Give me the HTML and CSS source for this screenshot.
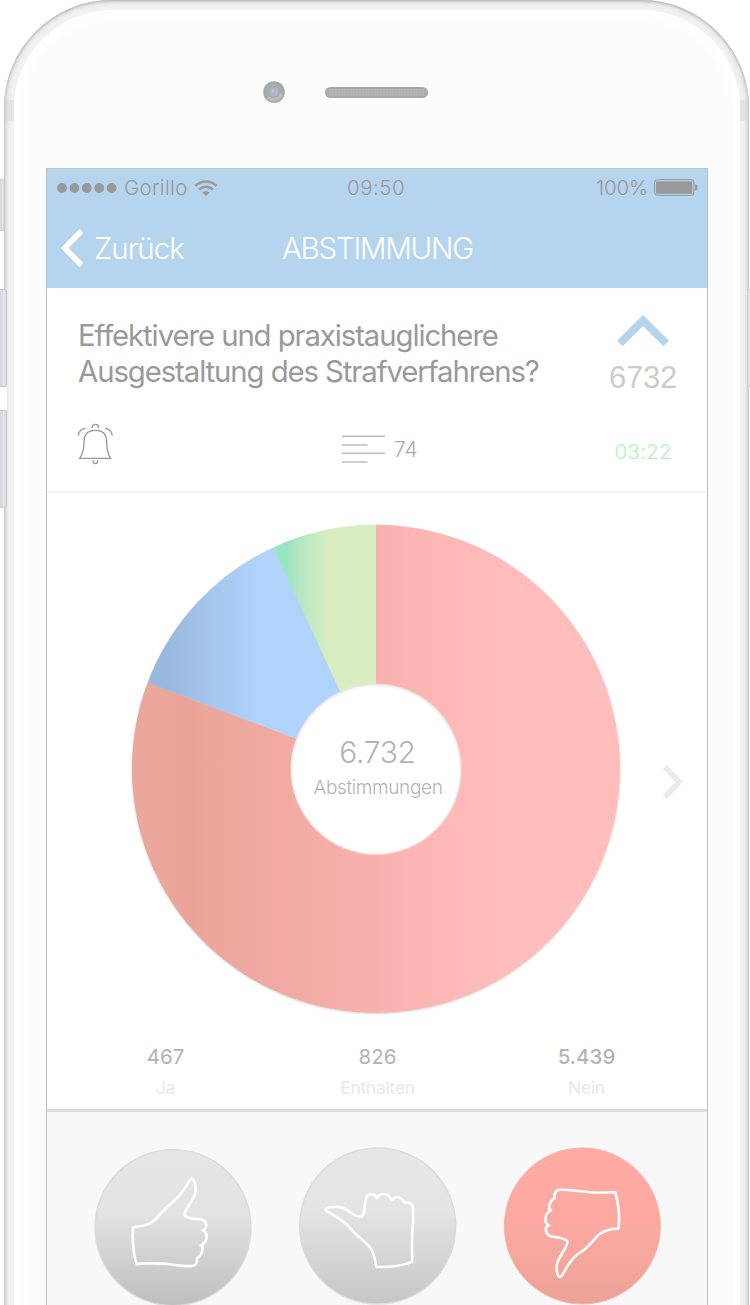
FILE: index.html
```html
<!DOCTYPE html>
<html lang="de">
<head>
<meta charset="utf-8">
<title>Abstimmung</title>
<link rel="stylesheet" href="styles.css">
</head>
<body>
<div class="stage">
  <div class="phone">
    <i class="antenna antenna-left"></i><i class="antenna antenna-right"></i>
    <div class="face">
      <div class="sensors">
        <svg class="camera" width="22" height="22" viewBox="0 0 22 22"><circle cx="11" cy="11" r="10.800" fill="#a6a6a6"/><circle cx="11" cy="11" r="8.600" fill="#acacac"/><path d="M3.500 17A10 10 0 0 0 20 14L15 11Z" fill="#bdbdbd"/><circle cx="11" cy="11" r="6.200" fill="#a9abb5"/><circle cx="11" cy="11" r="4.600" fill="#b0b5cb"/><circle cx="10" cy="10" r="1.500" fill="#bcc2d6"/><circle cx="13.500" cy="11.500" r="1" fill="#bcc2d6"/></svg>
        <div class="speaker"></div>
      </div>
      <main class="screen">
        <div class="status">
          <div class="carrier">
            <svg width="60" height="10" viewBox="0 0 60 10" fill="#999"><circle cx="5" cy="5" r="4.900"/><circle cx="17.400" cy="5" r="4.900"/><circle cx="29.800" cy="5" r="4.900"/><circle cx="42.200" cy="5" r="4.900"/><circle cx="54.600" cy="5" r="4.900"/></svg>
            <span class="carrier-name">Gorillo</span>
            <svg class="wifi" width="24" height="16" viewBox="0 0 24 16"><g fill="none" stroke="#999" stroke-width="2.500"><path d="M1.300 5.900Q6 1.500 12 1.500T22.700 5.900"/><path d="M5 9.700Q8.200 6.700 12 6.700T19 9.700"/></g><path d="M8.300 12.600Q12 9.400 15.700 12.600L12 15.900Z" fill="#999"/></svg>
          </div>
          <span class="clock">09:50</span>
          <div class="power">
            <span class="percent">100%</span>
            <svg width="44" height="17" viewBox="0 0 44 17"><rect x=".6" y=".6" width="39.300" height="15.800" rx="3" fill="none" stroke="#999" stroke-width="1"/><rect x="2" y="2.300" width="36.300" height="12.400" rx="1" fill="#999"/><path d="M41 5.500h1.200q1.300.5 1.300 3t-1.300 3H41z" fill="#999"/></svg>
          </div>
        </div>
        <header class="nav">
          <a class="back">
            <svg width="22" height="38" viewBox="0 0 22 38"><path d="M20.300 2L3.500 19 20.300 36" fill="none" stroke="#fff" stroke-width="5.500"/></svg>
            <span>Zurück</span>
          </a>
          <h1 class="nav-title">ABSTIMMUNG</h1>
        </header>
        <section class="question">
          <div class="question-top">
            <h2 class="question-text"><span class="line-one">Effektivere und praxistauglichere</span><br><span class="line-two">Ausgestaltung des Strafverfahrens?</span></h2>
            <div class="votes">
              <svg width="52" height="32" viewBox="0 0 52 32"><path d="M2.800 28.500L26 5.500 49.200 28.500" fill="none" stroke="#b5d4ed" stroke-width="8"/></svg>
              <span class="votes-count">6732</span>
            </div>
          </div>
          <div class="meta">
            <svg class="bell" width="42" height="45" viewBox="225 423 126 135" fill="none" stroke="#999" stroke-width="4"><path d="M239 535C249 521 252 508 252 486C252 461 265 451 286 451S320 461 320 486C320 508 322 521 332 535Z"/><path d="M276 445C275 429 297 429 296 445M279 541C279 554 293 554 293 541M235 467Q236 447 257 445M315 445Q335 447 337 467"/></svg>
            <div class="comments">
              <svg width="43" height="28" viewBox="0 0 43 28" stroke="#bdbdbd" stroke-width="1.500"><path d="M0 1.300h43M0 10h25.500M0 18.300h43M0 27h25.500"/></svg>
              <span>74</span>
            </div>
            <span class="timer">03:22</span>
          </div>
        </section>
        <section class="chart">
          <svg class="donut" width="500" height="500" viewBox="126 518.500 500 500">
            <defs>
              <linearGradient id="no" gradientUnits="userSpaceOnUse" x1="132" y1="0" x2="620" y2="0"><stop offset="0" stop-color="#eaa79a"/><stop offset=".12" stop-color="#eba598"/><stop offset=".33" stop-color="#f2aaa4"/><stop offset=".5" stop-color="#f9b1ae"/><stop offset=".64" stop-color="#fdb8b6"/><stop offset=".76" stop-color="#ffbcba"/><stop offset="1" stop-color="#ffbdbb"/></linearGradient>
              <linearGradient id="abstain" gradientUnits="userSpaceOnUse" x1="165" y1="0" x2="258" y2="0"><stop offset="0" stop-color="#99b8dd"/><stop offset="1" stop-color="#b0d3fc"/></linearGradient>
              <linearGradient id="yes" gradientUnits="userSpaceOnUse" x1="287" y1="0" x2="330" y2="0"><stop offset="0" stop-color="#99e5bf"/><stop offset=".3" stop-color="#b4e8c2"/><stop offset="1" stop-color="#d9edc1"/></linearGradient>
              <filter id="soft" x="-5%" y="-5%" width="110%" height="110%"><feGaussianBlur stdDeviation="1"/></filter>
            </defs>
            <circle cx="376" cy="769.300" r="244" fill="#d0d0d0" filter="url(#soft)"/>
            <path d="M376 768.300V524.300A244 244 0 1 1 147.600 682.300Z" fill="url(#no)"/>
            <path d="M376 768.300L147.600 682.300A244 244 0 0 1 273.300 547Z" fill="url(#abstain)"/>
            <path d="M376 768.300L273.300 547A244 244 0 0 1 376 524.300Z" fill="url(#yes)"/>
            <circle cx="376" cy="768.300" r="85.300" fill="#dedede"/>
            <circle cx="376" cy="769" r="84.500" fill="#fff" filter="url(#soft)"/>
            <circle cx="376" cy="769.800" r="83.200" fill="#fff"/>
          </svg>
          <div class="total"><span class="total-number">6.732</span><span class="total-label">Abstimmungen</span></div>
          <svg class="next" width="21" height="34" viewBox="0 0 21 34"><path d="M2 2L16.300 17 2 32" fill="none" stroke="#ebebeb" stroke-width="5.500"/></svg>
        </section>
        <section class="results">
          <div class="result yes"><b>467</b><span>Ja</span></div>
          <div class="result abstain"><b>826</b><span>Enthalten</span></div>
          <div class="result no"><b>5.439</b><span>Nein</span></div>
        </section>
        <footer class="actions">
          <svg width="170" height="165" viewBox="0 0 510 495">
            <defs><linearGradient id="grey" x1="0" y1="0" x2="0" y2="1"><stop offset="0" stop-color="#e5e5e5"/><stop offset=".4" stop-color="#e3e3e3"/><stop offset="1" stop-color="#bebebe"/></linearGradient></defs>
            <circle cx="249" cy="263" r="234" fill="url(#grey)" stroke="#dadae1" stroke-width="4"/>
            <path class="hand" d="M129 262C126 295 130 345 140 371Q142 374 149 371C195 370 215 369 235 372C260 376 285 380 305 378C320 376 322 368 321 355Q339 345 338 320L332 316Q351 308 350 285Q347 274 338 271Q350 265 349 255Q347 240 330 238C310 237 290 233 284 226C279 212 310 185 316 158C318 140 315 117 305 117C297 117 295 130 286 142C270 170 250 185 232 200C210 220 197 242 180 250C165 257 145 260 129 262Z"/>
          </svg>
          <svg width="170" height="165" viewBox="0 0 510 495">
            <defs><linearGradient id="silver" x1="0" y1="0" x2="0" y2="1"><stop offset="0" stop-color="#e6e6e6"/><stop offset=".4" stop-color="#e4e4e4"/><stop offset="1" stop-color="#c6c6c6"/></linearGradient></defs>
            <circle cx="248" cy="258" r="234" fill="url(#silver)" stroke="#dadae1" stroke-width="4"/>
            <path class="hand" d="M92 211Q90 204 105 202C120 199 135 199 150 207C165 216 180 231 198 230C212 226 207 195 213 175Q217 162 230 163Q244 165 246 175Q250 163 263 162Q282 161 290 180Q300 170 311 172Q322 176 329 188Q345 184 352 197Q355 205 354 250C349 290 350 310 352 365C335 373 295 382 244 381C240 360 238 340 225 322C210 305 190 290 177 277C162 258 148 243 92 211Z"/>
          </svg>
          <svg width="170" height="165" viewBox="0 0 510 495">
            <defs><linearGradient id="rose" x1="0" y1="0" x2="0" y2="1"><stop offset="0" stop-color="#ffaaa3"/><stop offset=".45" stop-color="#fda9a2"/><stop offset="1" stop-color="#eca397"/></linearGradient></defs>
            <circle cx="253" cy="258" r="234" fill="url(#rose)" stroke="#ffaea8" stroke-width="3"/>
            <path class="hand" d="M352 157C330 155 300 161 275 157C245 153 200 147 180 150Q168 156 170 174Q153 183 153 207L159 211Q142 218 142 240Q143 252 153 256Q142 258 144 272Q147 287 162 290C180 292 200 294 208 303C212 318 185 345 178 368C173 385 178 412 186 411C192 410 197 397 204 386C215 365 232 345 255 332C275 317 288 298 303 283C320 272 340 266 361 266C366 235 362 190 352 157Z"/>
          </svg>
        </footer>
      </main>
    </div>
  </div>
  <i class="recess"></i>
  <i class="button mute"></i><i class="button volume-up"></i><i class="button volume-down"></i><i class="button power-key"></i>
</div>
</body>
</html>
```
FILE: styles.css
```css
* { box-sizing: border-box; }
body { margin: 0; background: #fff; font-family: Inter, "Liberation Sans", sans-serif; color: #999; }
svg { display: block; flex: none; }
span, h1, h2 { white-space: nowrap; }
.stage { position: relative; width: 750px; height: 1305px; overflow: hidden; padding-left: 4px; }
.phone {
  position: relative; width: 745px; height: 1500px; padding: 10px 9px 0 10px;
  border-radius: 108px / 108px; background: #f2f2f2;
  box-shadow: inset 0 1px 2px #bebebe, inset 0 0 3px 1px #c6c6c6, inset 0 0 7px 1px #d6d6d6;
}
.antenna { position: absolute; top: 100px; width: 9px; height: 21px; background: rgba(210,210,210,.4); }
.antenna-left { left: 1px; }
.antenna-right { right: 0; }
.face {
  height: 1500px; padding: 73px 0 0 32px; border-radius: 99px; background: #fcfcfc;
  box-shadow: inset 0 0 1px 2px #fff, inset 0 0 9px 9px #fefefe;
}
.face .sensors { display: flex; align-items: center; height: 18px; padding-left: 217px; gap: 40px; }
.speaker { width: 103px; height: 11px; border-radius: 6px; border: 2px solid #a8a8a8; background: radial-gradient(circle, #a9a9a9 .5px, #b3b3b3 1px) 0 0 / 3px 3px; }
.screen { width: 662px; margin-top: 67px; border: 1px solid #bdbdbd; border-top-color: #c3c3c3; background: #fff; }
.status { display: grid; grid-template-columns: 300px 1fr 111px; align-items: center; height: 37px; background: #b5d4ed; font-size: 20.500px; font-weight: 350; line-height: 37px; }
.carrier { display: flex; align-items: center; padding-left: 10px; }
.carrier-name { width: 64px; margin-left: 7px; letter-spacing: .3px; }
.wifi { margin-left: 6px; }
.clock { letter-spacing: .5px; }
.power { display: flex; align-items: center; gap: 4px; }
.percent { width: 54px; letter-spacing: -.1px; }
.nav { display: flex; align-items: center; height: 82px; padding: 1px 0 0 14px; background: #b5d4ed; color: #fff; font-weight: 350; }
.back { display: flex; align-items: center; gap: 11px; width: 221px; font-size: 29.500px; letter-spacing: -1px; }
.nav-title { margin: 0; font-size: 29.500px; font-weight: 350; letter-spacing: -1.250px; }
.question { height: 205px; border-bottom: 2px solid #f5f5f5; }
.question-top { display: flex; height: 134px; padding: 27px 28px 0 31px; justify-content: space-between; }
.question-text { margin: 3px 0 0; font-size: 29.300px; font-weight: 380; line-height: 35.500px; letter-spacing: -1.070px; font-variant-ligatures: none; }
.votes { display: flex; flex-direction: column; align-items: center; width: 72px; }
.votes-count { margin-top: 11px; font: 31px/40px "Liberation Sans", sans-serif; letter-spacing: -.3px; color: #ccc; }
.meta { display: flex; padding: 0 35px 0 28px; height: 45px; }
.bell { margin-top: -1px; }
.comments { display: flex; align-items: center; gap: 9px; margin: 13px 0 4px 225px; font-size: 21px; font-weight: 300; color: #aaa; }
.timer { margin-left: auto; padding-top: 1px; font-size: 20.500px; font-weight: 350; line-height: 58px; letter-spacing: .3px; color: #b2f0bc; }
.chart { display: grid; grid-template-columns: 79px 500px 37px 21px; height: 545px; padding-top: 25.500px; }
.donut { grid-area: 1 / 2; }
.total { grid-area: 1 / 2; display: flex; flex-direction: column; align-items: center; padding-top: 213px; color: #b3b3b3; }
.total-number { padding-left: 3px; font-size: 30px; font-weight: 350; line-height: 40px; letter-spacing: -.3px; }
.total-label { padding-left: 4px; font-size: 19px; font-weight: 350; line-height: 31px; letter-spacing: -.350px; }
.next { grid-area: 1 / 4; margin-top: 246.500px; }
.results { display: grid; grid-template-columns: 237px 187px 236px; height: 71px; }
.result { display: flex; flex-direction: column; align-items: center; }
.result b { font-size: 20.500px; line-height: 38px; font-weight: 400; color: #b3b3b3; }
.result span { font-size: 17.500px; line-height: 24px; letter-spacing: -.3px; color: #e9e9e9; }
.no b { font-weight: 500; }
.no { padding-right: 5px; }
.actions { display: grid; grid-template-columns: 205px 203px 170px; height: 400px; padding: 28px 0 0 43px; border-top: 3px solid #dedede; background: #f8f8f8; }
.hand { fill: none; stroke: #fff; stroke-width: 7.800; stroke-linejoin: round; }
.recess { position: absolute; left: 0; top: 386px; width: 7px; height: 24px; background: #fff; }
.button { position: absolute; left: -2px; width: 9px; border: 1px solid #cbcbcb; border-radius: 2px; background: linear-gradient(90deg, #dadade 50%, #f0f0f0 60%, #d2d2d2); }
.mute { top: 179px; width: 7px; height: 52px; }
.volume-up { top: 289px; height: 98px; }
.volume-down { top: 410px; height: 98px; }
.power-key { top: 289px; left: 747px; height: 98px; background: #e5e5e5; }
```
